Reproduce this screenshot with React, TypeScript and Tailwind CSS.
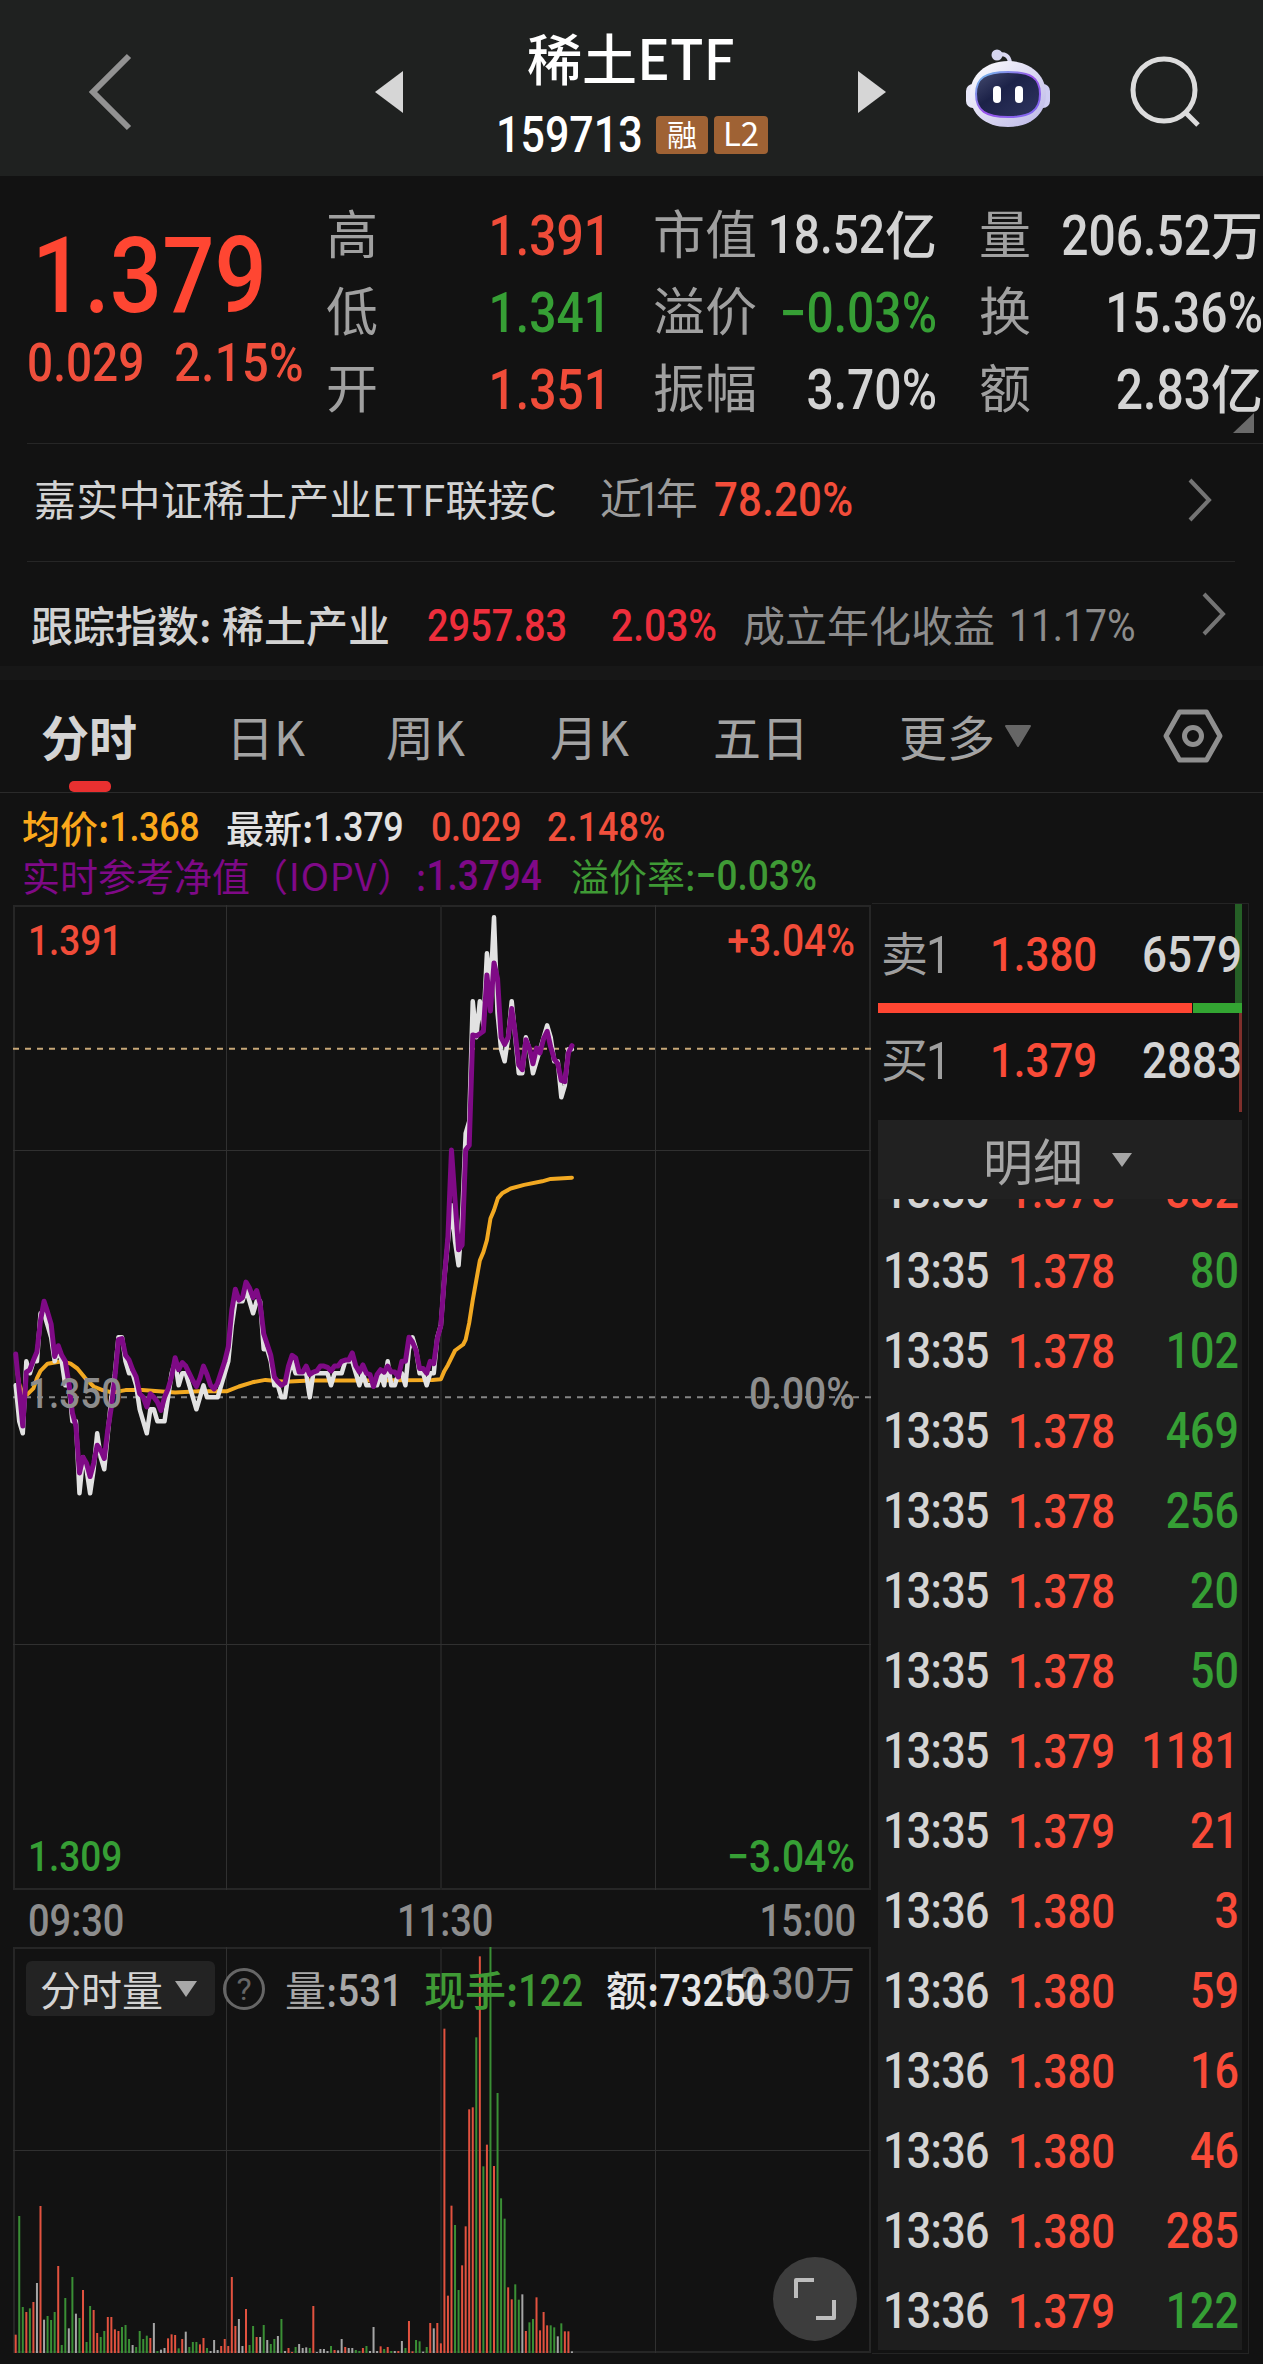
import React from 'react';

const PRICE = [
  1, -2, -3, 3, 2, 3, 3, 7, 7, 6, 5, 3, 4, 3, 1, 1, -2, -2, -8, -5, -6, -8, -6, -3, -5, -6, -3, 0, 2, 5,
  5, 3, 2, 2, 1, -1, -2, -3, -1, -1, -2, -2, -2, 0, 2, 3, 1, 2, 2, 1, 0, -1, 0, 1, 0, 0, 0, 0, 1, 2,
  3, 6, 8, 8, 8, 9, 8, 7, 8, 8, 4, 4, 3, 1, 1, 0, 0, 2, 3, 2, 2, 2, 2, 0, 2, 2, 2, 2, 2, 1,
  2, 2, 2, 3, 3, 3, 2, 1, 2, 1, 1, 1, 1, 2, 1, 3, 1, 1, 2, 2, 1, 4, 5, 4, 2, 2, 1, 2, 2, 5,
  6, 10, 13, 16, 13, 11, 15, 22, 23, 33, 30, 33, 31, 37, 34, 40, 32, 29, 28, 30, 33, 30, 27, 27, 30, 29, 27, 28, 29, 30,
  31, 30, 28, 28, 25, 26, 29, 29,
];

const IOPV = [
  3.6, 0.6, -2.4, 2.1, 2.3, 3.1, 3.8, 6.4, 8, 7.1, 6.1, 3.4, 4.3, 3.5, 3, 1.2, -1.3, -2.4, -6.3, -5,
  -5.5, -6.6, -5.5, -4, -4.4, -5.1, -2.7, -0.8, 1.7, 4.8, 4.9, 3.5, 3.1, 2.3, 1.7, 0.3, 0, -0.8, 0.3, 0,
  -0.4, -1.1, 0, 0.7, 1.7, 3.3, 2.3, 2.9, 2.6, 2, 1.4, 0.9, 1.6, 2.6, 1.9, 1, 0.7, 1.2, 2.1, 3,
  4.2, 7.3, 9, 8.1, 8.3, 9.6, 9.1, 8.3, 8.9, 7.8, 5.3, 4.4, 3.5, 1.7, 1.3, 1, 1.2, 2.6, 3.5, 3.3,
  2.1, 2.1, 2.6, 1.9, 2.1, 2.2, 2.6, 2.6, 2.5, 2.2, 2.6, 2.6, 3, 3.1, 3.1, 3.7, 2.6, 2.1, 2.7, 2,
  1.9, 0.9, 1.9, 2.3, 2.1, 2.6, 2.1, 2.1, 1.7, 3, 3, 5, 4.6, 3.9, 2.4, 2.4, 2, 3, 2.8, 4.9,
  6, 10, 13.4, 20.6, 16.4, 12.3, 12.7, 20.6, 21, 30.2, 30.1, 30.3, 30.5, 35.2, 32.2, 36.2, 34.9, 30, 29.4, 30,
  32.4, 30.3, 27.7, 27.3, 29.8, 29.1, 27.8, 29.1, 28.7, 29.9, 30.5, 29.2, 28.2, 27.8, 26.4, 26.3, 28.7, 29.3,
];

// [minute, ticks above the previous close]
const AVERAGE = [
  [0.5, 2], [1, 1.1], [2, 0.2], [3.3, 0.25], [5, 0.75], [6, 1.6], [7, 2.2], [9, 2.8], [11, 2.9], [13.2, 3], [15.5, 2.8],
  [17.4, 2.4], [19.6, 1.6], [22, 0.9], [24.5, 0.6], [27.3, 0.4], [31, 0.6], [35.7, 0.6], [45, 0.4],
  [51.7, 0.5], [59.5, 0.5], [63, 0.9], [66.8, 1.25], [70.5, 1.45], [76, 1.3], [83, 1.4], [97, 1.4],
  [117.6, 1.45], [120, 1.5], [121, 2.2], [122, 2.7], [124, 3.9], [126.3, 4.4], [127, 4.8], [128, 6.2],
  [129, 8.1], [131, 11.4], [132, 12.1], [133, 13.1], [134, 14.9], [135, 15.6], [136.1, 16.6],
  [137.3, 17], [139.7, 17.4], [143.5, 17.7], [148.6, 18], [151, 18.2], [157, 18.3],
];

// r = up, g = down, w = flat, followed by the bar height
const VOLUME = (
  'r55 g411 g138 r123 g134 r153 w210 r441 w100 g111 g99 g123 r261 g24 g165 w74 g228 w118 g105 r189 ' +
  'g33 g141 r129 r60 g48 g66 r108 r108 r71 r66 g78 g84 g42 w24 g18 g66 g42 g52 r45 w90 ' +
  'g6 w10 w15 r44 r56 r54 g14 r42 w64 g18 g33 g33 r26 r45 g15 w6 w39 w9 r21 r42 ' +
  'r21 r228 r81 w102 w21 r132 g24 g81 r48 w48 g84 w39 g27 g42 w51 g102 w6 r15 r3 g18 ' +
  'w27 w15 w17 g15 r141 w3 w12 w12 w6 g21 r9 w8 w42 r18 w15 w15 g9 g6 r15 g21 ' +
  'w6 w78 w6 r20 g12 r18 g6 w6 r6 w36 g15 r96 r5 g39 g35 w4 g18 r90 w74 r90 ' +
  'r29 r973 r172 r442 g384 g189 r263 r380 r731 r737 g947 r1190 g560 r625 g1220 r561 g780 g464 g403 r197 ' +
  'r161 g206 g160 w176 r66 g92 g102 r167 r68 r123 r83 g83 g77 w50 g89 r65 r65 w5'
).split(' ');

const BAR_COLORS: Record<string, string> = { r: '#e2523f', g: '#3a8f35', w: '#a5a5a5' };

const TRADES: [string, string, string, 'up' | 'down'][] = [
  ['13:35', '1.378', '332', 'up'],
  ['13:35', '1.378', '80', 'down'],
  ['13:35', '1.378', '102', 'down'],
  ['13:35', '1.378', '469', 'down'],
  ['13:35', '1.378', '256', 'down'],
  ['13:35', '1.378', '20', 'down'],
  ['13:35', '1.378', '50', 'down'],
  ['13:35', '1.379', '1181', 'up'],
  ['13:35', '1.379', '21', 'up'],
  ['13:36', '1.380', '3', 'up'],
  ['13:36', '1.380', '59', 'up'],
  ['13:36', '1.380', '16', 'up'],
  ['13:36', '1.380', '46', 'up'],
  ['13:36', '1.380', '285', 'up'],
  ['13:36', '1.379', '122', 'down'],
];

const minuteX = (i: number) => 2.7 + i * 3.543;
const tickY = (v: number) => 492.3 - v * 12;
const toPoints = (values: number[]) => values.map((v, i) => `${minuteX(i)},${tickY(v)}`).join(' ');

function Num({ className = '', children }: { className?: string; children: React.ReactNode }) {
  return (
    <span className={`inline-block scale-y-[1.15] font-['Roboto',sans-serif] ${className}`}>
      {children}
    </span>
  );
}

function Header() {
  return (
    <header className="flex h-[176px] items-center bg-[#1f2120]">
      <svg className="ml-[86px] mt-2 h-[78px] w-[48px]" viewBox="0 0 48 78" fill="none">
        <path d="M43 3 L7 39 L43 75" stroke="#929292" strokeWidth="6" />
      </svg>
      <svg className="ml-[241px] mt-2 h-[44px] w-[28px]" viewBox="0 0 28 44">
        <path d="M0 22 L28 1 V43 Z" fill="#d6d6d6" />
      </svg>
      <div className="ml-[93px] flex w-[272px] flex-col pt-[13px] font-medium">
        <div className="ml-[31px] h-[76px] whitespace-nowrap text-[55px] leading-[74px] text-white">稀土ETF</div>
        <div className="flex h-[76px] items-center pt-[4px]">
          <Num className="w-[160px] pt-[2px] text-[43px] leading-none text-white">159713</Num>
          <span className="flex h-[38px] w-[52px] items-center justify-center rounded-[4px] bg-[#9f6234] pb-[3px] text-[30px] font-normal text-white">
            融
          </span>
          <span className="ml-[6px] flex h-[38px] w-[54px] items-center justify-center rounded-[4px] bg-[#9f6234] pb-[3px] text-[33px] font-normal text-white">
            L2
          </span>
        </div>
      </div>
      <svg className="ml-[90px] mt-2 h-[44px] w-[28px]" viewBox="0 0 28 44">
        <path d="M28 22 L0 1 V43 Z" fill="#d6d6d6" />
      </svg>
      <Robot />
      <svg className="ml-[76px] mt-[7px] h-[74px] w-[74px]" viewBox="0 0 74 74" fill="none" stroke="#dcdcdc" strokeWidth="5">
        <circle cx="36" cy="35" r="31" />
        <path d="M57 57 L70 70" />
      </svg>
    </header>
  );
}

function Robot() {
  return (
    <svg className="ml-[78px] h-[80px] w-[88px]" viewBox="0 0 88 80">
      <defs>
        <linearGradient id="shell" x1="0" y1="0" x2="1" y2="1">
          <stop offset="0" stopColor="#ffffff" />
          <stop offset="1" stopColor="#b9b5e6" />
        </linearGradient>
        <linearGradient id="rim" x1="0" y1="0" x2="1" y2="1">
          <stop offset="0" stopColor="#6fc6ea" />
          <stop offset="0.5" stopColor="#9a52ea" />
          <stop offset="1" stopColor="#7a6cf0" />
        </linearGradient>
        <linearGradient id="visor" x1="0" y1="0" x2="1" y2="1">
          <stop offset="0" stopColor="#454b70" />
          <stop offset="0.4" stopColor="#1c2248" />
          <stop offset="1" stopColor="#2f3560" />
        </linearGradient>
      </defs>
      <path d="M33 7 Q45 4 46 15" fill="none" stroke="#dad9f2" strokeWidth="4" />
      <circle cx="33" cy="7" r="5.5" fill="#d6d6f0" />
      <rect x="2" y="36" width="14" height="24" rx="7" fill="#e6e6f8" />
      <rect x="72" y="36" width="14" height="24" rx="7" fill="#cfcdf2" />
      <path d="M44 13 C66 13 82 27 82 46 C82 66 67 79 44 79 C21 79 6 66 6 46 C6 27 22 13 44 13 Z" fill="url(#shell)" />
      <path d="M44 24 C67 24 76 30 76 46 C76 63 66 69 44 69 C22 69 12 63 12 46 C12 30 21 24 44 24 Z" fill="url(#visor)" stroke="url(#rim)" strokeWidth="2" />
      <rect x="29" y="38" width="8" height="17" rx="4" fill="#fff" />
      <rect x="51" y="38" width="8" height="17" rx="4" fill="#fff" />
    </svg>
  );
}

const LABEL_WIDTHS = ['w-[160px]', 'w-[115px]', 'w-[80px]'];
const VALUE_WIDTHS = ['mr-[42px] w-[125px]', 'mr-[42px] w-[169px]', 'w-[204px]'];

function StatRow({ items }: { items: [string, string, string, string][] }) {
  return (
    <div className="flex h-[77px] items-center text-[52px]">
      {items.map(([label, value, unit, color], i) => (
        <React.Fragment key={label}>
          <span className={`whitespace-nowrap pb-[5px] text-[#a0a0a0] ${LABEL_WIDTHS[i]}`}>{label}</span>
          <span className={`flex items-center justify-end whitespace-nowrap font-medium ${color} ${VALUE_WIDTHS[i]}`}>
            <Num className={`pt-[2px] ${value === '18.52' ? 'text-[46px]' : 'text-[48px]'}`}>{value}</Num>
            {unit && <span className="pb-[3px]">{unit}</span>}
          </span>
        </React.Fragment>
      ))}
    </div>
  );
}

function Quote() {
  return (
    <section className="relative flex h-[267px] pl-[27px]">
      <div className="w-[299px] pt-[45px] font-medium text-[#ff4632]">
        <Num className="ml-[5px] text-[92px] leading-[110px]">1.379</Num>
        <div className="mt-[5px] flex h-[54px] items-center text-[47px] text-[#f04f3c]">
          <Num className="w-[147px] text-[46px]">0.029</Num>
          <Num className="tracking-[0.01em]">2.15%</Num>
        </div>
      </div>
      <div className="pt-[20px]">
        <StatRow
          items={[
            ['高', '1.391', '', 'text-[#f04c39]'],
            ['市值', '18.52', '亿', 'text-[#d4d4d4]'],
            ['量', '206.52', '万', 'text-[#d4d4d4]'],
          ]}
        />
        <StatRow
          items={[
            ['低', '1.341', '', 'text-[#369f35]'],
            ['溢价', '−0.03%', '', 'text-[#369f35]'],
            ['换', '15.36%', '', 'text-[#d4d4d4]'],
          ]}
        />
        <StatRow
          items={[
            ['开', '1.351', '', 'text-[#f04c39]'],
            ['振幅', '3.70%', '', 'text-[#d4d4d4]'],
            ['额', '2.83', '亿', 'text-[#d4d4d4]'],
          ]}
        />
      </div>
      <svg className="absolute bottom-[10px] right-[9px] h-[20px] w-[21px]" viewBox="0 0 21 20">
        <path d="M21 0 V20 H0 Z" fill="#6a6a6a" />
      </svg>
    </section>
  );
}

function Chevron({ className = '' }: { className?: string }) {
  return (
    <svg className={`h-[44px] w-[26px] ${className}`} viewBox="0 0 26 44" fill="none">
      <path d="M3 2 L22 22 L3 42" stroke="#747474" strokeWidth="4" />
    </svg>
  );
}

function FundRows() {
  return (
    <section>
      <div className="ml-[27px] h-px bg-[#262626]" />
      <div className="flex h-[117px] items-center whitespace-nowrap pb-[6px] pl-[34px] text-[42px]">
        <span className="w-[566px] pb-[5px] tracking-[0.005em] text-[#d2d2d2]">嘉实中证稀土产业ETF联接C</span>
        <span className="w-[114px] pb-[5px] text-[#9c9c9c]">
          近<Num className="-mx-[5px]">1</Num>年
        </span>
        <Num className="w-[473px] font-medium tracking-[0.005em] text-[#f24d3a]">78.20%</Num>
        <Chevron />
      </div>
      <div className="ml-[27px] mr-[28px] h-px bg-[#262626]" />
      <div className="flex h-[104px] items-center whitespace-nowrap pl-[31px] pt-[23px] text-[42px]">
        <span className="w-[191px] pb-[4px] font-medium text-[#d2d2d2]">跟踪指数:</span>
        <span className="w-[205px] pb-[4px] font-medium text-[#d2d2d2]">稀土产业</span>
        <Num className="w-[184px] pt-[2px] text-[38px] font-medium text-[#ee2e3c]">2957.83</Num>
        <Num className="w-[132px] pt-[2px] text-[39px] font-medium text-[#ee2e3c]">2.03%</Num>
        <span className="w-[266px] pb-[4px] text-[#8c8c8c]">成立年化收益</span>
        <Num className="w-[192px] pt-[1px] text-[39px] text-[#8c8c8c]">11.17%</Num>
        <Chevron className="mb-[24px]" />
      </div>
      <div className="h-[14px] bg-[#171717]" />
    </section>
  );
}

function Tabs() {
  return (
    <nav className="relative flex h-[113px] items-center whitespace-nowrap border-b border-[#2a2a2a] pb-px pl-[41px] text-[48px] text-[#a3a3a3]">
      <span className="w-[185px] pb-px font-bold text-[#d4d4d4]">分时</span>
      <span className="w-[160px] pb-px">日K</span>
      <span className="w-[164px] pb-px">周K</span>
      <span className="w-[163px] pb-px">月K</span>
      <span className="w-[186px] pb-px">五日</span>
      <span className="pb-px">更多</span>
      <svg className="ml-[10px] h-[22px] w-[26px]" viewBox="0 0 26 22">
        <path d="M1 1 H25 L13 21 Z" fill="#666" stroke="#666" strokeLinejoin="round" strokeWidth="2" />
      </svg>
      <svg className="ml-[132px] h-[54px] w-[60px]" viewBox="0 0 60 54" fill="none" stroke="#8f8f8f" strokeWidth="5" strokeLinejoin="round">
        <path d="M16.5 3 H43.5 L57 27 L43.5 51 H16.5 L3 27 Z" />
        <circle cx="30" cy="27" r="8.5" />
      </svg>
      <span className="absolute bottom-0 left-[69px] h-[11px] w-[42px] rounded-[5px] bg-[#e83030]" />
    </nav>
  );
}

function Legend() {
  return (
    <div className="h-[110px] whitespace-nowrap pl-[22px] pt-[8px] text-[38px]">
      <div className="flex h-[50px] items-center font-medium">
        <span className="flex w-[204px] items-center text-[#fba81c]">
          均价:<Num className="pt-[2px] text-[36px] tracking-[-0.01em]">1.368</Num>
        </span>
        <span className="flex w-[205px] items-center text-[#e2e2e2]">
          最新:<Num className="pt-[2px] text-[36px] tracking-[-0.01em]">1.379</Num>
        </span>
        <Num className="w-[116px] pt-[2px] text-[36px] tracking-[-0.01em] text-[#f04f3c]">0.029</Num>
        <Num className="pt-[2px] text-[36px] text-[#f04f3c]">2.148%</Num>
      </div>
      <div className="flex h-[46px] items-center">
        <span className="flex w-[549px] items-center text-[#7f0987]">
          实时参考净值<span className="tracking-[0.02em]">（IOPV）</span>:
          <Num className="pt-[3px] text-[37px] font-medium">1.3794</Num>
        </span>
        <span className="flex items-center text-[#3f9a35]">
          溢价率:<Num className="pt-[3px] text-[37px] font-medium">−0.03%</Num>
        </span>
      </div>
    </div>
  );
}

function PriceChart() {
  return (
    <div className="relative h-[985px] w-[858px] font-medium">
      <svg className="h-[985px] w-[858px]" viewBox="0 0 858 985" fill="none">
        <rect x="1" y="1" width="856" height="983" stroke="#262626" strokeWidth="2" />
        <path d="M428 0 V985" stroke="#222" strokeWidth="2" />
        <path d="M213.5 0 V985 M642.5 0 V985 M0 245.5 H858 M0 739.5 H858" stroke="#303030" />
        <path d="M0 492.3 H858" stroke="#858585" strokeWidth="2" strokeDasharray="6 6" />
        <path d="M0 143.8 H858" stroke="#c8a878" strokeWidth="2" strokeDasharray="6 6" />
        <g strokeLinejoin="round" strokeLinecap="round">
          <polyline points={AVERAGE.map(([m, v]) => `${minuteX(m)},${tickY(v)}`).join(' ')} stroke="#f2a922" strokeWidth="4" />
          <polyline points={toPoints(PRICE)} stroke="#e2e2e2" strokeWidth="4.5" />
          <polyline points={toPoints(IOPV)} stroke="#7f0a86" strokeWidth="5" />
        </g>
      </svg>
      <div className="absolute left-[15px] right-[16px] top-[14px] flex items-center justify-between text-[39px] leading-[44px] text-[#f04c39]">
        <Num className="text-[37px]">1.391</Num>
        <Num>+3.04%</Num>
      </div>
      <div className="absolute left-[15px] right-[16px] top-[467px] flex items-center justify-between text-[39px] leading-[44px] text-[#8d8d8d]">
        <Num className="text-[37px]">1.350</Num>
        <Num>0.00%</Num>
      </div>
      <div className="absolute left-[15px] right-[16px] bottom-[11px] flex items-center justify-between text-[39px] leading-[44px] text-[#369f35]">
        <Num className="text-[37px]">1.309</Num>
        <Num>−3.04%</Num>
      </div>
    </div>
  );
}

function VolumeChart() {
  return (
    <div className="relative h-[406px] w-[858px]">
      <svg className="h-[406px] w-[858px]" viewBox="0 0 858 406" fill="none">
        <rect x="1" y="1" width="856" height="404" stroke="#262626" strokeWidth="2" />
        <path d="M428 0 V406" stroke="#222" strokeWidth="2" />
        <path d="M213.5 0 V406 M642.5 0 V406 M0 203.5 H858" stroke="#303030" />
        {VOLUME.map((bar, i) => {
          const h = Number(bar.slice(1)) / 3;
          return <rect key={i} x={minuteX(i) - 1} y={406 - h} width="2" height={h} fill={BAR_COLORS[bar[0]]} />;
        })}
      </svg>
      <div className="absolute right-[16px] top-[7px] flex h-[56px] items-center text-[40px] text-[#8d8d8d]">
        <Num className="pt-[4px] text-[38px] font-medium">12.30</Num>万
      </div>
      <div className="absolute left-[13px] top-[14px] flex h-[55px] items-center whitespace-nowrap text-[41px]">
        <div className="flex h-[55px] w-[189px] items-center rounded-[6px] bg-[#232323] pl-[14px] text-[#d4d4d4]">
          分时量
          <svg className="ml-[12px] h-[16px] w-[22px]" viewBox="0 0 22 16">
            <path d="M0 0 H22 L11 16 Z" fill="#a8a8a8" />
          </svg>
        </div>
        <span className="ml-[8px] flex h-[42px] w-[42px] items-center justify-center rounded-full border-[3px] border-[#666] font-['Roboto',sans-serif] text-[32px] text-[#666]">
          ?
        </span>
        <span className="ml-[20px] flex w-[139px] items-center text-[41px] text-[#a8a8a8]">
          量:<Num className="pt-[5px] text-[38px] font-medium tracking-[0.01em]">531</Num>
        </span>
        <span className="flex w-[182px] items-center text-[41px] font-medium text-[#3f9a35]">
          现手:<Num className="pt-[5px] text-[38px]">122</Num>
        </span>
        <span className="flex items-center text-[41px] font-medium text-[#e6e6e6]">
          额:<Num className="pt-[5px] text-[38px]">73250</Num>
        </span>
      </div>
      <div className="absolute bottom-[12px] right-[14px] flex h-[84px] w-[84px] items-center justify-center rounded-full bg-[#3d3d3d]">
        <svg className="h-[44px] w-[44px]" viewBox="0 0 44 44" fill="none" stroke="#bdbdbd" strokeWidth="4" strokeLinejoin="round">
          <path d="M3 21 V3 H21 M41 23 V41 H23" />
        </svg>
      </div>
    </div>
  );
}

function OrderBook() {
  return (
    <aside className="relative flex h-[1451px] w-[377px] flex-col border-b border-r border-t border-[#242424] pb-[3px] pl-[6px] text-[42px] font-medium">
      <span className="absolute right-[6px] top-0 h-[99px] w-[7px] bg-[#255f26]" />
      <span className="absolute right-[6px] top-[109px] h-[99px] w-[3px] bg-[#7e2f2b]" />
      <div className="relative flex h-[99px] items-center pl-[3px] pt-[2px]">
        <span className="w-[109px] pb-[3px] text-[47px] font-normal text-[#9f9f9f]">
          卖<Num className="-ml-[2px] text-[45px]">1</Num>
        </span>
        <Num className="w-[152px] text-[#f94b38]">1.380</Num>
        <Num className="text-[44px] text-[#d4d4d4]">6579</Num>
      </div>
      <div className="flex h-[10px] w-[364px]">
        <div className="w-[314px] bg-[#ff4632]" />
        <div className="ml-px flex-1 bg-[#33a532]" />
      </div>
      <div className="relative flex h-[107px] items-center pb-[12px] pl-[3px]">
        <span className="w-[109px] pb-[3px] text-[47px] font-normal text-[#9f9f9f]">
          买<Num className="-ml-[2px] text-[45px]">1</Num>
        </span>
        <Num className="w-[152px] text-[#f94b38]">1.379</Num>
        <Num className="text-[44px] text-[#d4d4d4]">2883</Num>
      </div>
      <div className="flex h-[79px] w-[364px] items-center bg-[#212121] pl-[105px] text-[50px] font-normal text-[#a6a6a6]">
        明细
        <svg className="ml-[29px] h-[14px] w-[20px]" viewBox="0 0 20 14">
          <path d="M0 0 H20 L10 14 Z" fill="#a6a6a6" />
        </svg>
      </div>
      <div className="flex w-[364px] flex-1 flex-col justify-end overflow-hidden bg-[#1e1e1e]">
        {TRADES.map(([time, price, amount, side], i) => (
          <div key={i} className="flex h-[80px] shrink-0 items-center pl-[5px] pr-[3px] pt-[3px]">
            <Num className="w-[125px] text-[43px] tracking-[-0.015em] text-[#d4d4d4]">{time}</Num>
            <Num className="text-[#f94b38]">{price}</Num>
            <Num className={`ml-auto text-[43px] ${side === 'up' ? 'text-[#f94b38]' : 'text-[#369f35]'}`}>{amount}</Num>
          </div>
        ))}
      </div>
    </aside>
  );
}

export default function App() {
  return (
    <div className="h-[2364px] w-[1263px] overflow-hidden bg-[#121212] font-['Noto_Sans_CJK_SC',sans-serif]">
      <Header />
      <Quote />
      <FundRows />
      <Tabs />
      <Legend />
      <div className="flex items-start pl-[13px]">
        <div className="pt-[2px]">
          <PriceChart />
          <div className="flex h-[57px] items-center px-[15px] pt-[5px] text-[38px] font-medium text-[#8d8d8d]">
            <Num className="w-[369px]">09:30</Num>
            <Num>11:30</Num>
            <Num className="ml-auto">15:00</Num>
          </div>
          <VolumeChart />
        </div>
        <div className="pl-px">
          <OrderBook />
        </div>
      </div>
    </div>
  );
}
